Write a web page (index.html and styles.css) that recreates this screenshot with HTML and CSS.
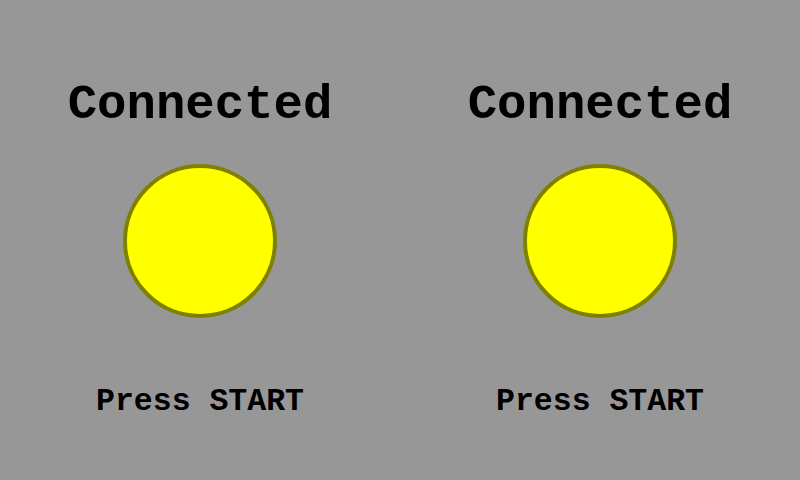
FILE: index.html
```
<!DOCTYPE html>
<html lang="en">
<head>
  <meta charset="UTF-8">
  <title>Controllers</title>
  <link rel="stylesheet" href="styles.css">
</head>
<body>
  <div class="players">
    <div class="player">
      <div class="status">Connected</div>
      <div class="light"></div>
      <div class="hint">Press START</div>
    </div>
    <div class="player">
      <div class="status">Connected</div>
      <div class="light"></div>
      <div class="hint">Press START</div>
    </div>
  </div>
</body>
</html>
```

FILE: styles.css
```
* {
  box-sizing: border-box;
}
body {
  margin: 0;
  background: #979797;
  color: #000;
  font-family: 'Liberation Mono', 'Courier New', monospace;
  font-weight: bold;
}
.players {
  display: flex;
  height: 480px;
}
.player {
  flex: 1;
  display: flex;
  flex-direction: column;
  align-items: center;
}
.status {
  margin-top: 75px;
  font-size: 49px;
  line-height: 60px;
}
.light {
  margin-top: 29px;
  width: 154px;
  height: 154px;
  border-radius: 50%;
  background: #ffff00;
  border: 4px solid #808000;
}
.hint {
  margin-top: 64px;
  font-size: 31.5px;
  line-height: 40px;
}
```
